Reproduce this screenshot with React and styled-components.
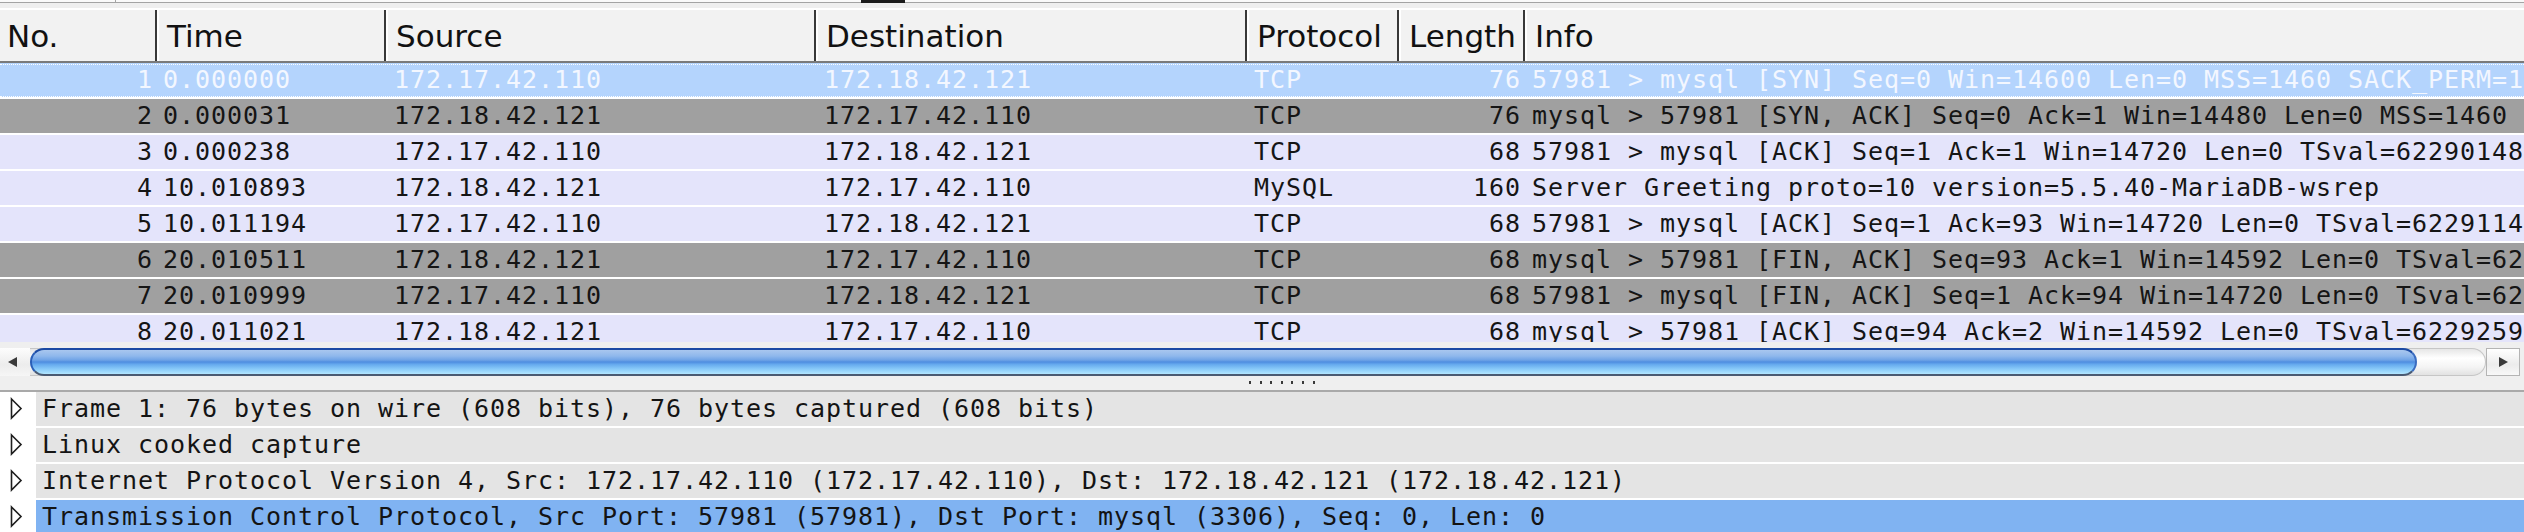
import React from "react";
import styled, { createGlobalStyle, css } from "styled-components";

const COLS = "157px 229px 430px 431px 152px 126px 1fr";
const MONO = `"DejaVu Sans Mono", "Liberation Mono", monospace`;

// info strings stop where the pane edge cuts them in the capture
const packets = [
  { no: 1, time: "0.000000", src: "172.17.42.110", dst: "172.18.42.121", proto: "TCP", len: 76, info: "57981 > mysql [SYN] Seq=0 Win=14600 Len=0 MSS=1460 SACK_PERM=1", kind: "selected" },
  { no: 2, time: "0.000031", src: "172.18.42.121", dst: "172.17.42.110", proto: "TCP", len: 76, info: "mysql > 57981 [SYN, ACK] Seq=0 Ack=1 Win=14480 Len=0 MSS=1460", kind: "flag" },
  { no: 3, time: "0.000238", src: "172.17.42.110", dst: "172.18.42.121", proto: "TCP", len: 68, info: "57981 > mysql [ACK] Seq=1 Ack=1 Win=14720 Len=0 TSval=62290148", kind: "tcp" },
  { no: 4, time: "10.010893", src: "172.18.42.121", dst: "172.17.42.110", proto: "MySQL", len: 160, info: "Server Greeting proto=10 version=5.5.40-MariaDB-wsrep", kind: "tcp" },
  { no: 5, time: "10.011194", src: "172.17.42.110", dst: "172.18.42.121", proto: "TCP", len: 68, info: "57981 > mysql [ACK] Seq=1 Ack=93 Win=14720 Len=0 TSval=6229114", kind: "tcp" },
  { no: 6, time: "20.010511", src: "172.18.42.121", dst: "172.17.42.110", proto: "TCP", len: 68, info: "mysql > 57981 [FIN, ACK] Seq=93 Ack=1 Win=14592 Len=0 TSval=62", kind: "flag" },
  { no: 7, time: "20.010999", src: "172.17.42.110", dst: "172.18.42.121", proto: "TCP", len: 68, info: "57981 > mysql [FIN, ACK] Seq=1 Ack=94 Win=14720 Len=0 TSval=62", kind: "flag" },
  { no: 8, time: "20.011021", src: "172.18.42.121", dst: "172.17.42.110", proto: "TCP", len: 68, info: "mysql > 57981 [ACK] Seq=94 Ack=2 Win=14592 Len=0 TSval=6229259", kind: "tcp" },
];

const tree = [
  { label: "Frame 1: 76 bytes on wire (608 bits), 76 bytes captured (608 bits)" },
  { label: "Linux cooked capture" },
  { label: "Internet Protocol Version 4, Src: 172.17.42.110 (172.17.42.110), Dst: 172.18.42.121 (172.18.42.121)" },
  { label: "Transmission Control Protocol, Src Port: 57981 (57981), Dst Port: mysql (3306), Seq: 0, Len: 0", selected: true },
];

const headers = ["No.", "Time", "Source", "Destination", "Protocol", "Length", "Info"];

const rowColors = {
  selected: { bg: "#b4d4fd", fg: "#f3f7ff" },
  flag: { bg: "#a0a0a0", fg: "#151515" },
  tcp: { bg: "#e4e4fb", fg: "#151515" },
};

const GlobalStyle = createGlobalStyle`
  html, body {
    margin: 0;
    padding: 0;
    background: #efefef;
    overflow: hidden;
  }
`;

const Window = styled.div`
  width: 2524px;
  height: 532px;
  display: flex;
  flex-direction: column;
  overflow: hidden;
  background: #efefef;
`;

const TopStrip = styled.div`
  height: 8px;
  flex: none;
  display: flex;
  align-items: flex-start;
`;

const StripPiece = styled.div`
  height: 2px;
  background: #fafafa;
  border-bottom: 1px solid #a4a4a4;
  border-right: ${(p) => (p.$edge ? "1px solid #a4a4a4" : "none")};
  width: ${(p) => (p.$w ? `${p.$w}px` : "auto")};
  flex: ${(p) => (p.$w ? "none" : "1")};
`;

const StripTab = styled.div`
  width: 44px;
  height: 3px;
  flex: none;
  background: #1c1c1c;
`;

const HeaderRow = styled.div`
  display: grid;
  grid-template-columns: ${COLS};
  height: 55px;
  flex: none;
  box-sizing: border-box;
  background: #f2f2f2;
  border-top: 2px solid #ffffff;
  border-bottom: 2px solid #7a7a7a;
`;

const HeadCell = styled.div`
  box-sizing: border-box;
  display: flex;
  align-items: center;
  padding-left: ${(p) => (p.$first ? "7px" : "8px")};
  border-left: ${(p) => (p.$first ? "none" : "2px solid #ffffff")};
  border-right: ${(p) => (p.$last ? "none" : "2px solid #383838")};
  font-family: "DejaVu Sans", "Liberation Sans", sans-serif;
  font-size: 31px;
  color: #111;
  white-space: nowrap;
`;

const ListViewport = styled.div`
  height: 279px;
  flex: none;
  overflow: hidden;
  background: #ffffff;
`;

const PacketRow = styled.div`
  display: grid;
  grid-template-columns: ${COLS};
  height: 34px;
  margin-bottom: 2px;
  position: relative;
  font-family: ${MONO};
  font-size: 25px;
  letter-spacing: 0.95px;
  background: ${(p) => rowColors[p.$kind].bg};
  color: ${(p) => rowColors[p.$kind].fg};
  ${(p) =>
    p.$kind === "selected" &&
    css`
      &::after {
        content: "";
        position: absolute;
        left: 0;
        right: 0;
        top: 1px;
        bottom: 0;
        border-top: 1px dotted rgba(255, 255, 255, 0.95);
        border-bottom: 1px dotted rgba(255, 255, 255, 0.95);
        pointer-events: none;
      }
    `}
`;

const Cell = styled.div`
  padding: ${(p) => (p.$right ? "0 4px 0 0" : `0 0 0 ${p.$pad ?? 8}px`)};
  line-height: 34px;
  white-space: nowrap;
  overflow: hidden;
  text-align: ${(p) => (p.$right ? "right" : "left")};
`;

const HScrollArea = styled.div`
  height: 35px;
  flex: none;
  box-sizing: border-box;
  padding-top: 6px;
  background: #efefef;
`;

const ScrollBar = styled.div`
  display: flex;
  height: 28px;
  padding-right: 4px;
`;

const ArrowEnd = styled.div`
  width: 30px;
  flex: none;
  display: flex;
  align-items: center;
  padding-left: 7px;
  box-sizing: border-box;
  background: linear-gradient(#fdfdfd, #ececec 60%, #f6f6f6);
`;

const Track = styled.div`
  flex: 1;
  display: flex;
  box-sizing: border-box;
  border-radius: 0 14px 14px 0;
  border: 1px solid #c6c6c6;
  border-left: none;
  background: linear-gradient(#e6e6e6, #ffffff 35%, #f4f4f4 70%, #e2e2e2);
`;

const Thumb = styled.div`
  width: 2387px;
  flex: none;
  margin-top: -1px;
  margin-bottom: -1px;
  box-sizing: border-box;
  border-radius: 14px;
  border-top: 2px solid #1b4aa3;
  border-bottom: 2px solid #4a5a72;
  border-left: 2px solid #2a5fb8;
  border-right: 2px solid #3a6cc0;
  background: linear-gradient(
    #a9c7ef 0%,
    #8fb8ec 25%,
    #6fa3e6 42%,
    #4e8de0 50%,
    #66aaee 60%,
    #86c8f8 78%,
    #b2e6ff 100%
  );
`;

const ArrowButton = styled.div`
  width: 34px;
  flex: none;
  display: flex;
  align-items: center;
  justify-content: center;
  box-sizing: border-box;
  border: 1px solid #b4b4b4;
  background: linear-gradient(#ffffff, #ececec 60%, #f8f8f8);
`;

const Splitter = styled.div`
  height: 15px;
  flex: none;
  box-sizing: border-box;
  display: flex;
  justify-content: center;
  align-items: center;
  padding: 0 0 2px 40px;
  background: #efefef;
  border-bottom: 2px solid #a9a9a9;
`;

const Grip = styled.div`
  width: 66px;
  height: 3px;
  background: repeating-linear-gradient(
    to right,
    #3a3a3a 0 2px,
    transparent 2px 10.6px
  );
`;

const DetailPane = styled.div`
  flex: 1;
  overflow: hidden;
  background: #ffffff;
`;

const TreeRow = styled.div`
  display: flex;
  height: 34px;
  margin-bottom: 2px;
`;

const Expander = styled.div`
  width: 36px;
  flex: none;
  display: flex;
  align-items: center;
  padding-left: 9px;
  box-sizing: border-box;
`;

const TreeLabel = styled.div`
  flex: 1;
  padding-left: 6px;
  line-height: 34px;
  font-family: ${MONO};
  font-size: 25px;
  letter-spacing: 0.95px;
  color: #141414;
  white-space: nowrap;
  background: ${(p) => (p.$selected ? "#80b3f2" : "#e4e4e4")};
`;

function Arrow({ dir }) {
  const pts = dir === "left" ? "10,0 10,10 1,5" : "1,0 1,10 10,5";
  return (
    <svg width="11" height="10" viewBox="0 0 11 10">
      <polygon points={pts} fill="#3a3a3a" />
    </svg>
  );
}

function TreeToggle() {
  return (
    <svg width="14" height="24" viewBox="0 0 14 24">
      <polygon
        points="2.5,2 12,11.5 2.5,21"
        fill="none"
        stroke="#1e1e1e"
        strokeWidth="1.6"
        strokeLinejoin="miter"
      />
    </svg>
  );
}

export default function App() {
  return (
    <>
      <GlobalStyle />
      <Window>
        <TopStrip>
          <StripPiece $w={115} $edge />
          <StripPiece $w={745} />
          <StripTab />
          <StripPiece />
        </TopStrip>

        <HeaderRow>
          {headers.map((h, i) => (
            <HeadCell key={h} $first={i === 0} $last={i === headers.length - 1}>
              {h}
            </HeadCell>
          ))}
        </HeaderRow>

        <ListViewport>
          {packets.map((p) => (
            <PacketRow key={p.no} $kind={p.kind}>
              <Cell $right>{p.no}</Cell>
              <Cell $pad={6}>{p.time}</Cell>
              <Cell>{p.src}</Cell>
              <Cell>{p.dst}</Cell>
              <Cell $pad={7}>{p.proto}</Cell>
              <Cell $right>{p.len}</Cell>
              <Cell $pad={7}>{p.info}</Cell>
            </PacketRow>
          ))}
        </ListViewport>

        <HScrollArea>
          <ScrollBar>
            <ArrowEnd>
              <Arrow dir="left" />
            </ArrowEnd>
            <Track>
              <Thumb />
            </Track>
            <ArrowButton>
              <Arrow dir="right" />
            </ArrowButton>
          </ScrollBar>
        </HScrollArea>

        <Splitter>
          <Grip />
        </Splitter>

        <DetailPane>
          {tree.map((t) => (
            <TreeRow key={t.label}>
              <Expander>
                <TreeToggle />
              </Expander>
              <TreeLabel $selected={t.selected}>{t.label}</TreeLabel>
            </TreeRow>
          ))}
        </DetailPane>
      </Window>
    </>
  );
}
